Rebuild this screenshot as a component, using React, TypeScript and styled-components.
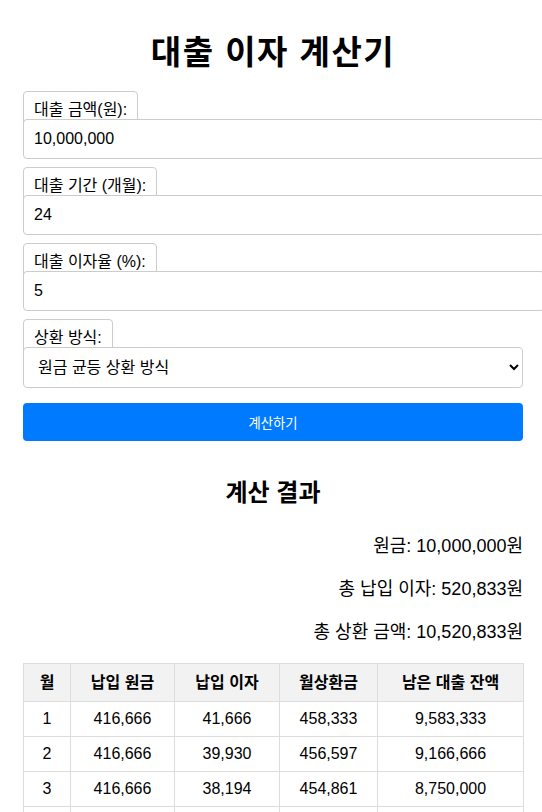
import React, { useMemo, useState } from 'react';
import styled, { createGlobalStyle } from 'styled-components';

const GlobalStyle = createGlobalStyle`
  body {
    margin: 0;
    background: #fff;
    color: #000;
    font-family: "Liberation Sans", Arial, "Noto Sans CJK KR", sans-serif;
  }
`;

const Page = styled.div`
  padding: 0 0 40px 23px;
`;

const Container = styled.div`
  width: 500px;
`;

const Title = styled.h1`
  margin: 34px 0 20px;
  font-size: 33px;
  line-height: 37px;
  letter-spacing: 1.5px;
  font-weight: 700;
  text-align: center;
`;

const Form = styled.form`
  display: flex;
  flex-direction: column;
  gap: 8px;
`;

const Group = styled.div`
  display: flex;
  flex-direction: column;
  align-items: flex-start;
`;

// label box sits behind the field; the field overlaps its lower edge
const Label = styled.label`
  display: block;
  margin-bottom: -10px;
  padding: 9px 10px;
  border: 1px solid #ccc;
  border-radius: 4px;
  font-size: 16px;
  line-height: 18px;
  color: #000;
`;

const Input = styled.input`
  width: 100%;
  padding: 10px;
  border: 1px solid #ccc;
  border-radius: 4px;
  font-family: inherit;
  font-size: 16px;
  line-height: 18px;
  color: #000;
  background: #fff;
  outline: none;
`;

const Select = styled.select`
  width: 100%;
  height: 41px;
  padding: 0 10px;
  border: 1px solid #ccc;
  border-radius: 4px;
  font-family: inherit;
  font-size: 16px;
  color: #000;
  background: #fff;
  outline: none;
`;

const SubmitButton = styled.button`
  margin-top: 7px;
  width: 100%;
  height: 38px;
  border: none;
  border-radius: 4px;
  background: #007bff;
  color: #fff;
  font-family: inherit;
  font-size: 13.33px;
  cursor: pointer;
`;

const ResultTitle = styled.h2`
  margin: 38px 0 27px;
  font-size: 24px;
  line-height: 28px;
  font-weight: 700;
  text-align: center;
`;

const Summary = styled.p`
  margin: 0 0 19px;
  font-size: 18px;
  line-height: 24px;
  text-align: right;
`;

const Table = styled.table`
  width: 100%;
  margin-top: 1px;
  border-collapse: collapse;
  table-layout: fixed;
`;

const Th = styled.th<{ $w: number }>`
  box-sizing: border-box;
  width: ${(p) => p.$w}px;
  padding: 8px;
  border: 1px solid #ddd;
  background: #f2f2f2;
  font-size: 16px;
  line-height: 21px;
  font-weight: 700;
  text-align: center;
`;

const Td = styled.td`
  padding: 8px;
  border: 1px solid #ddd;
  font-size: 16px;
  line-height: 18px;
  text-align: center;
`;

const fmt = (n: number) => Math.floor(n + 1e-6).toLocaleString('en-US');

const columns = [
  { label: '월', w: 47 },
  { label: '납입 원금', w: 104 },
  { label: '납입 이자', w: 105 },
  { label: '월상환금', w: 98 },
  { label: '남은 대출 잔액', w: 146 },
];

export default function App() {
  const [amount, setAmount] = useState('10,000,000');
  const [months, setMonths] = useState('24');
  const [rate, setRate] = useState('5');
  const [method, setMethod] = useState('equal-principal');

  // 원금 균등 상환 schedule
  const schedule = useMemo(() => {
    const principal = Number(amount.replace(/,/g, '')) || 0;
    const n = Number(months) || 1;
    const r = (Number(rate) || 0) / 100 / 12;
    const monthly = principal / n;
    let balance = principal;
    let totalInterest = 0;
    const rows = [];
    for (let i = 1; i <= n; i++) {
      const interest = balance * r;
      totalInterest += interest;
      balance -= monthly;
      rows.push({ month: i, principal: monthly, interest, payment: monthly + interest, balance: Math.max(balance, 0) });
    }
    return { principal, totalInterest, rows };
  }, [amount, months, rate]);

  return (
    <Page>
      <GlobalStyle />
      <Container>
        <Title>대출 이자 계산기</Title>
        <Form onSubmit={(e) => e.preventDefault()}>
          <Group>
            <Label htmlFor="amount">대출 금액(원):</Label>
            <Input id="amount" value={amount} onChange={(e) => setAmount(e.target.value)} />
          </Group>
          <Group>
            <Label htmlFor="months">대출 기간 (개월):</Label>
            <Input id="months" value={months} onChange={(e) => setMonths(e.target.value)} />
          </Group>
          <Group>
            <Label htmlFor="rate">대출 이자율 (%):</Label>
            <Input id="rate" value={rate} onChange={(e) => setRate(e.target.value)} />
          </Group>
          <Group>
            <Label htmlFor="method">상환 방식:</Label>
            <Select id="method" value={method} onChange={(e) => setMethod(e.target.value)}>
              <option value="equal-principal">원금 균등 상환 방식</option>
              <option value="equal-payment">원리금 균등 상환 방식</option>
            </Select>
          </Group>
          <SubmitButton type="submit">계산하기</SubmitButton>
        </Form>

        <ResultTitle>계산 결과</ResultTitle>
        <Summary>원금: {fmt(schedule.principal)}원</Summary>
        <Summary>총 납입 이자: {fmt(schedule.totalInterest)}원</Summary>
        <Summary>총 상환 금액: {fmt(schedule.principal + schedule.totalInterest)}원</Summary>

        <Table>
          <thead>
            <tr>
              {columns.map((c) => (
                <Th key={c.label} $w={c.w}>{c.label}</Th>
              ))}
            </tr>
          </thead>
          <tbody>
            {schedule.rows.map((row) => (
              <tr key={row.month}>
                <Td>{row.month}</Td>
                <Td>{fmt(row.principal)}</Td>
                <Td>{fmt(row.interest)}</Td>
                <Td>{fmt(row.payment)}</Td>
                <Td>{fmt(row.balance)}</Td>
              </tr>
            ))}
          </tbody>
        </Table>
      </Container>
    </Page>
  );
}
